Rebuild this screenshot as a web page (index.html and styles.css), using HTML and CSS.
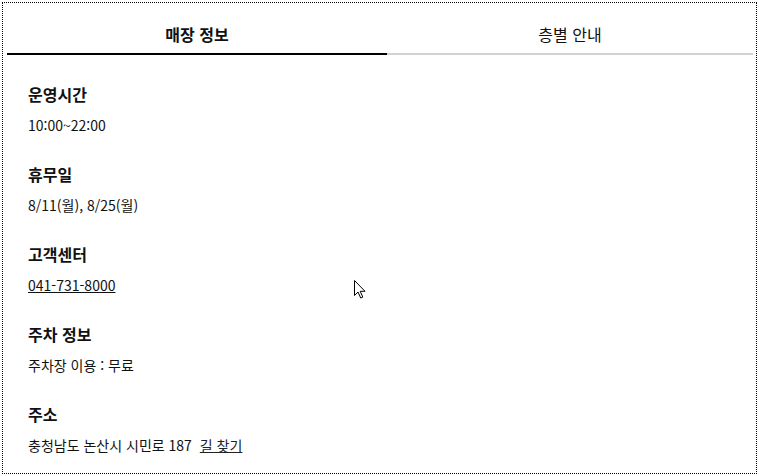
FILE: index.html
```html
<!DOCTYPE html>
<html lang="ko">
<head>
<meta charset="utf-8">
<link rel="stylesheet" href="styles.css">
</head>
<body>
<div class="frame">
  <div class="tabs">
    <div class="tab active">매장 정보</div>
    <div class="tab rest">층별 안내</div>
  </div>
  <div class="content">
    <section class="sec">
      <h3 class="title">운영시간</h3>
      <p class="text">10:00~22:00</p>
    </section>
    <section class="sec">
      <h3 class="title">휴무일</h3>
      <p class="text">8/11(월), 8/25(월)</p>
    </section>
    <section class="sec">
      <h3 class="title">고객센터</h3>
      <p class="text"><a class="tel" href="#">041-731-8000</a></p>
    </section>
    <section class="sec">
      <h3 class="title">주차 정보</h3>
      <p class="text">주차장 이용 : 무료</p>
    </section>
    <section class="sec">
      <h3 class="title">주소</h3>
      <p class="text">충청남도 논산시 시민로 187 <a class="way" href="#">길 찾기</a></p>
    </section>
  </div>
  <svg class="cursor" width="13" height="19" viewBox="0 0 13 19">
    <path d="M0.5 0.5 L0.5 15.5 L4 12 L6.7 18 L8.8 17.1 L6.2 11.3 L11 11.3 Z" fill="#fff" stroke="#000" stroke-width="1" stroke-linejoin="miter"/>
  </svg>
</div>
</body>
</html>
```
FILE: styles.css
```css
html, body {
  margin: 0;
  padding: 0;
  background: #fff;
}
body {
  font-family: "Noto Sans CJK KR", "Noto Sans", sans-serif;
  color: #111;
}
.frame {
  position: relative;
  box-sizing: border-box;
  margin: 2px 0 0 2px;
  width: 755px;
  height: 472px;
  border: 1px dotted #000;
  padding: 0 3px 0 4px;
  overflow: hidden;
}
.tabs {
  display: flex;
}
.tab {
  text-align: center;
  font-size: 16px;
  line-height: 20px;
  padding: 21px 0 9px;
  border-bottom: 2px solid #d2d2d6;
  color: #111;
}
.tab.active {
  flex: 0 0 380px;
  font-weight: bold;
  border-bottom-color: #000;
}
.tab.rest {
  flex: 1;
}
.content {
  padding: 29px 0 0 21px;
  display: flex;
  flex-direction: column;
  gap: 29px;
}
.sec {
  display: flex;
  flex-direction: column;
  gap: 11px;
}
.title {
  margin: 0;
  font-size: 16px;
  line-height: 20px;
  font-weight: bold;
}
.text {
  margin: 0;
  font-size: 14px;
  line-height: 20px;
}
.tel {
  color: #111;
  text-decoration: underline;
}
.way {
  color: #222;
  text-decoration: underline;
  margin-left: 4px;
}
.cursor {
  position: absolute;
  left: 351px;
  top: 277px;
}
```
